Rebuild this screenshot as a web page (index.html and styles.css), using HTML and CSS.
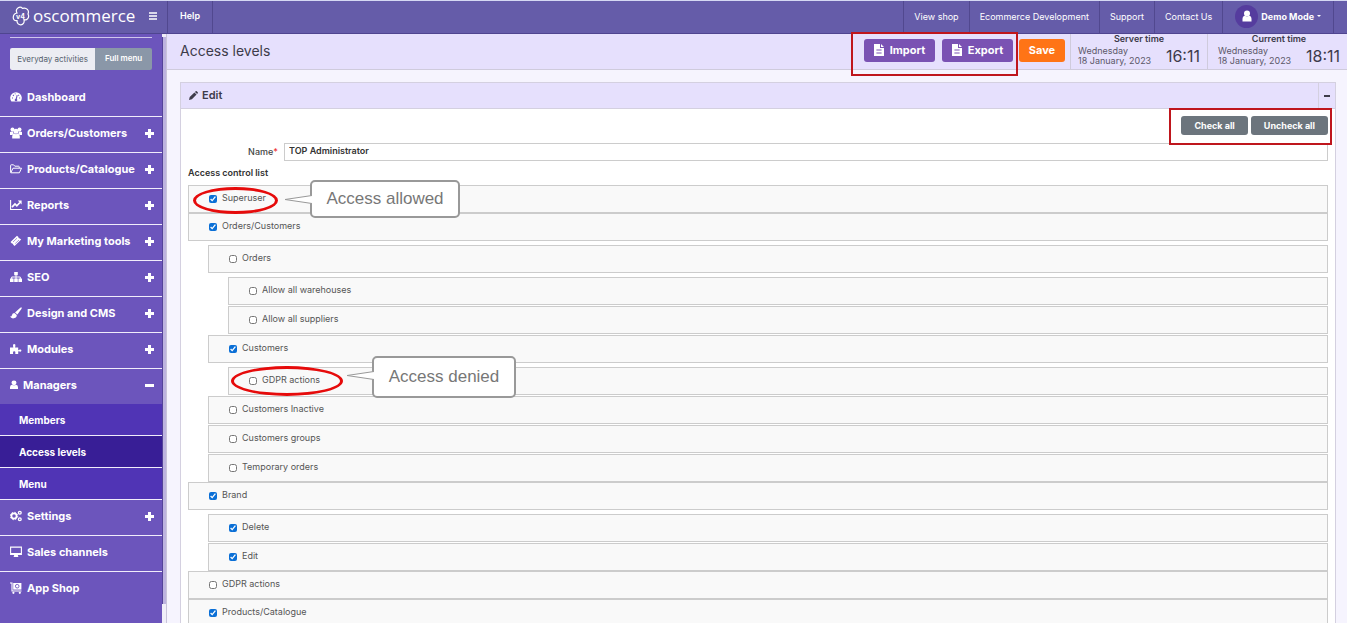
FILE: index.html
```html
<!DOCTYPE html>
<html lang="en">
<head>
  <meta charset="UTF-8">
  <meta name="viewport" content="width=device-width, initial-scale=1">
  <title>Access levels</title>
  <link rel="stylesheet" href="styles.css">
</head>
<body>

  <header class="header">
    <div class="brand">
      <a href="#" class="logo">
        <svg class="logo-icon" viewBox="0 0 18 20">
          <path d="M5 7C2.6 2.4 8 -.4 10.5 2.4C14.5 1 17.6 4.6 16 8C18 11.6 14.6 15 12 13.6C13.4 20.4 4.6 20.4 5 14.6C-.4 15.4 .4 7.6 5 7Z" fill="none" stroke="#fff" stroke-width="1.2"/>
          <text x="4" y="13" class="logo-v">v4</text>
        </svg>
        <span>oscommerce</span>
      </a>
      <button class="menu-toggle" aria-label="Toggle menu">
        <svg viewBox="0 0 8 8"><path d="M0 1h8M0 4h8M0 7h8" stroke="#fff" stroke-width="1.6"/></svg>
      </button>
    </div>
    <nav class="top-nav">
      <a href="#" class="help-link">Help</a>
      <a href="#" class="push-right">View shop</a>
      <a href="#">Ecommerce Development</a>
      <a href="#">Support</a>
      <a href="#">Contact Us</a>
      <a href="#" class="user">
        <span class="avatar"><svg viewBox="0 0 10 12"><circle cx="5" cy="3.4" r="3" fill="#fff"/><path d="M0.5 11.5V9Q0.5 6 3 5.8Q5 7.4 7 5.8Q9.5 6 9.5 9V11.5Z" fill="#fff"/></svg></span>
        Demo Mode
        <span class="caret"></span>
      </a>
    </nav>
  </header>

  <div class="layout">
    <aside class="sidebar">
      <div class="menu-switch">
        <button class="switch-btn">Everyday activities</button>
        <button class="switch-btn active">Full menu</button>
      </div>
      <ul class="menu">
        <li><a href="#">
          <svg class="icon" viewBox="0 0 12 12"><path d="M1.4 10.5A5.8 5.8 0 1 1 10.6 10.5Z" fill="#fff"/><path d="M6 9L7.2 4.2M2 7h1M9.2 7h1M3 4l.8.8M5.2 2.4v.9M9 4l-.7.7" stroke="#6c55bc" stroke-width="1.1"/><circle cx="6" cy="9" r="1.3" fill="#6c55bc"/></svg>
          Dashboard</a></li>
        <li><a href="#">
          <svg class="icon" viewBox="0 0 12 12"><g fill="#fff"><circle cx="2.5" cy="2.4" r="2"/><circle cx="9.5" cy="2.4" r="2"/><circle cx="6" cy="4.2" r="2.5"/><path d="M0 8V5Q1 4 3 4.6L3.6 7Q2.4 7.4 2.2 8ZM12 8V5Q11 4 9 4.6L8.4 7Q9.6 7.4 9.8 8ZM2.2 11.5V9Q2.6 6.8 4.4 6.6Q6 8 7.6 6.6Q9.4 6.8 9.8 9V11.5Z"/></g></svg>
          Orders/Customers</a><span class="sign plus"></span></li>
        <li><a href="#">
          <svg class="icon" viewBox="0 0 12 12"><path d="M.6 9.5V2.4Q.6 1.8 1.2 1.8H3.6L4.8 3.2H8.6Q9.2 3.2 9.2 3.8V5M.8 9.8L3 5.2H11.5L9.4 9.8Z" fill="none" stroke="#fff" stroke-linejoin="round"/></svg>
          Products/Catalogue</a><span class="sign plus"></span></li>
        <li><a href="#">
          <svg class="icon" viewBox="0 0 12 12"><path d="M.6 1V10.5H12" fill="none" stroke="#fff" stroke-width="1.1"/><path d="M2 8.2L5 5L6.8 6.8L10 3.5" fill="none" stroke="#fff" stroke-width="1.7"/><path d="M7.8 1.6H11.6V5.4Z" fill="#fff"/></svg>
          Reports</a><span class="sign plus"></span></li>
        <li><a href="#">
          <svg class="icon" viewBox="0 0 12 12"><path d="M.5 7L7 .8L8.4 2Q8 3.4 9.8 3.4L11.2 4.6L4.6 11L3.2 9.8Q3.4 8.4 1.9 8.4Z" fill="#fff"/><path d="M3 7L7 3.2M5.2 8.6L9 5" stroke="#6c55bc" stroke-width=".6"/></svg>
          My Marketing tools</a><span class="sign plus"></span></li>
        <li><a href="#">
          <svg class="icon" viewBox="0 0 12 12"><path d="M4.2 1h3.6v3.2H4.2ZM0 7.6h3.6V11H0ZM4.2 7.6h3.6V11H4.2ZM8.4 7.6H12V11H8.4Z" fill="#fff"/><path d="M6 4V8M1.7 8V6H10.3V8" fill="none" stroke="#fff"/></svg>
          SEO</a><span class="sign plus"></span></li>
        <li><a href="#">
          <svg class="icon" viewBox="0 0 12 12"><path d="M11.6.4Q12 1 11.4 2L7.4 7.4L5 5.4L10 1Q11 .2 11.6.4ZM4.4 6L6.8 8Q6.8 11.2 3 11.4Q1 11.4 0 9.6Q1.8 9.8 2 8Q2.4 6 4.4 6Z" fill="#fff"/></svg>
          Design and CMS</a><span class="sign plus"></span></li>
        <li><a href="#">
          <svg class="icon" viewBox="0 0 12 12"><path d="M0 4.4H3.2Q3.6 4 3 3.2Q2.6 1 4.2 1Q5.8 1 5.4 3.2Q4.8 4 5.2 4.4H8.2V7Q9 7.4 9.6 6.6Q11.4 6.2 11.4 7.6Q11.4 9.2 9.6 8.6Q9 8 8.2 8.4V11H5.4Q5 10.4 5.4 9.6Q5.4 8.2 4.2 8.2Q3 8.2 3 9.6Q3.4 10.4 3 11H0Z" fill="#fff"/></svg>
          Modules</a><span class="sign plus"></span></li>
        <li><a href="#">
          <svg class="icon narrow" viewBox="0 0 9 12"><circle cx="4.5" cy="3.6" r="2.8" fill="#fff"/><path d="M0 10.5V8.4Q0 6 2.2 5.6Q4.5 7.2 6.8 5.6Q9 6 9 8.4V10.5Z" fill="#fff"/></svg>
          Managers</a><span class="sign minus"></span>
          <ul class="submenu">
            <li><a href="#">Members</a></li>
            <li class="current"><a href="#">Access levels</a></li>
            <li><a href="#">Menu</a></li>
          </ul>
        </li>
        <li><a href="#">
          <svg class="icon" viewBox="0 0 12 12"><circle cx="4" cy="6" r="2.6" fill="none" stroke="#fff" stroke-width="1.7"/><circle cx="4" cy="6" r="3.7" fill="none" stroke="#fff" stroke-width="1" stroke-dasharray="1.5 1.4"/><circle cx="9.8" cy="2.8" r="1.4" fill="none" stroke="#fff" stroke-width="1.3"/><circle cx="9.8" cy="9.2" r="1.4" fill="none" stroke="#fff" stroke-width="1.3"/></svg>
          Settings</a><span class="sign plus"></span></li>
        <li><a href="#">
          <svg class="icon" viewBox="0 0 12 12"><path d="M.6 1.1H11.4V8.4H.6Z" fill="none" stroke="#fff" stroke-width="1.1"/><path d="M1 7h10v1.4H1ZM4.4 8.5H7.6L8.4 11H3.6Z" fill="#fff"/></svg>
          Sales channels</a></li>
        <li><a href="#">
          <svg class="icon" viewBox="0 0 12 12"><path d="M0 1H2V9H11.5" fill="none" stroke="#fff" stroke-width="1.1"/><path d="M3.2 1H11.4V7.6H3.2Z" fill="#fff"/><circle cx="7.2" cy="4.2" r="1.8" fill="none" stroke="#6c55bc" stroke-width=".9"/><circle cx="3.4" cy="10.8" r="1.1" fill="#fff"/><circle cx="9.8" cy="10.8" r="1.1" fill="#fff"/></svg>
          App Shop</a></li>
      </ul>
    </aside>
    <div class="divider"><div class="divider-bar"></div></div>

    <main class="content">
      <div class="page-bar">
        <h1>Access levels</h1>
        <div class="highlight actions-mark">
          <button class="btn btn-purple"><svg viewBox="0 0 10 12"><path d="M0 0H6V4H10V12H0ZM7 0L10 3H7Z" fill="#fff"/><path d="M2.4 6H7.6M2.4 9H7.6" stroke="#7a52b3"/></svg>Import</button>
          <button class="btn btn-purple"><svg viewBox="0 0 10 12"><path d="M0 0H6V4H10V12H0ZM7 0L10 3H7Z" fill="#fff"/><path d="M2.4 6H7.6M2.4 9H7.6" stroke="#7a52b3"/></svg>Export</button>
        </div>
        <button class="btn btn-save">Save</button>
        <div class="clock">
          <strong>Server time</strong>
          <div class="clock-row"><span>Wednesday<br>18 January, 2023</span><span class="time">16:11</span></div>
        </div>
        <div class="clock">
          <strong>Current time</strong>
          <div class="clock-row"><span>Wednesday<br>18 January, 2023</span><span class="time">18:11</span></div>
        </div>
      </div>

      <section class="panel">
        <div class="panel-head">
          <h2><svg viewBox="0 0 10 10"><path d="M0 10L.8 6.8L6 1.6L8.4 4L3.2 9.2ZM6.6 1L7.4.3Q8 -.2 8.6.3L9.7 1.4Q10.2 2 9.7 2.6L9 3.4Z" fill="#3d3b4a"/></svg>Edit</h2>
          <button class="collapse" aria-label="Collapse"></button>
        </div>
        <div class="panel-body">
          <div class="highlight checks-mark">
            <button class="btn-grey">Check all</button>
            <button class="btn-grey">Uncheck all</button>
          </div>
          <div class="field">
            <label for="levelName">Name<span class="required">*</span></label>
            <input type="text" id="levelName" value="TOP Administrator">
          </div>
          <h3>Access control list</h3>

          <ul class="acl">
            <li>
              <div class="acl-row">
                <label><input type="checkbox" checked> Superuser</label>
                <span class="ring ring-allowed"></span>
                <div class="callout callout-allowed">Access allowed
                  <svg viewBox="0 0 28 12"><path d="M28 2.5L1 6.5L28 10.5" fill="#fff" stroke="#999"/></svg>
                </div>
              </div>
            </li>
            <li>
              <div class="acl-row"><label><input type="checkbox" checked> Orders/Customers</label></div>
              <ul>
                <li>
                  <div class="acl-row"><label><input type="checkbox"> Orders</label></div>
                  <ul>
                    <li><div class="acl-row"><label><input type="checkbox"> Allow all warehouses</label></div></li>
                    <li><div class="acl-row"><label><input type="checkbox"> Allow all suppliers</label></div></li>
                  </ul>
                </li>
                <li>
                  <div class="acl-row"><label><input type="checkbox" checked> Customers</label></div>
                  <ul>
                    <li>
                      <div class="acl-row">
                        <label><input type="checkbox"> GDPR actions</label>
                        <span class="ring ring-denied"></span>
                        <div class="callout callout-denied">Access denied
                          <svg viewBox="0 0 28 12"><path d="M28 2.5L1 6.5L28 10.5" fill="#fff" stroke="#999"/></svg>
                        </div>
                      </div>
                    </li>
                  </ul>
                </li>
                <li><div class="acl-row"><label><input type="checkbox"> Customers Inactive</label></div></li>
                <li><div class="acl-row"><label><input type="checkbox"> Customers groups</label></div></li>
                <li><div class="acl-row"><label><input type="checkbox"> Temporary orders</label></div></li>
              </ul>
            </li>
            <li>
              <div class="acl-row"><label><input type="checkbox" checked> Brand</label></div>
              <ul>
                <li><div class="acl-row"><label><input type="checkbox" checked> Delete</label></div></li>
                <li><div class="acl-row"><label><input type="checkbox" checked> Edit</label></div></li>
              </ul>
            </li>
            <li><div class="acl-row"><label><input type="checkbox"> GDPR actions</label></div></li>
            <li><div class="acl-row"><label><input type="checkbox" checked> Products/Catalogue</label></div></li>
          </ul>
        </div>
      </section>
    </main>
  </div>

</body>
</html>
```

FILE: styles.css
```css
* {
  box-sizing: border-box;
}

body {
  margin: 0;
  height: 100vh;
  overflow: hidden;
  display: flex;
  flex-direction: column;
  font-family: Inter, "Liberation Sans", sans-serif;
  font-size: 9px;
  color: #555;
  background-color: #f6f4fe;
}

a {
  color: inherit;
  text-decoration: none;
}

button {
  font-family: inherit;
  border: none;
  padding: 0;
  cursor: pointer;
}

ul {
  list-style: none;
  margin: 0;
  padding: 0;
}

svg {
  display: block;
}

/* Header */
.header {
  display: flex;
  flex: none;
  height: 34px;
  border-top: 1px solid #d5d8f3;
  border-bottom: 1px solid #4f4590;
  background-color: #655ca9;
  color: white;
}

.brand {
  display: flex;
  align-items: center;
  justify-content: space-between;
  width: 168px;
  padding: 0 10px 2px 12px;
  border-right: 1px solid #51488f;
}

.logo {
  display: flex;
  align-items: center;
  gap: 3px;
  font-family: "Open Sans", Lato, sans-serif;
  font-size: 17px;
  font-weight: 400;
  line-height: 20px;
}

.logo-icon {
  width: 18px;
  height: 20px;
}

.logo-v {
  font: bold 7px Inter, sans-serif;
  fill: #fff;
}

.menu-toggle {
  background: none;
}

.menu-toggle svg {
  width: 8px;
  height: 8px;
}

.top-nav {
  display: flex;
  flex: 1;
  padding-right: 13px;
}

.top-nav a {
  display: flex;
  align-items: center;
  padding: 0 10px 2px;
  border-right: 1px solid #51488f;
  font-size: 9px;
  font-weight: 400;
}

.top-nav .help-link {
  padding: 0 12px 3px;
  font-weight: 600;
}

.top-nav .push-right {
  margin-left: auto;
  border-left: 1px solid #51488f;
}

.top-nav .user {
  gap: 3px;
  padding: 0 12px 2px;
  font-weight: 700;
}

.avatar {
  display: flex;
  align-items: center;
  justify-content: center;
  width: 23px;
  height: 23px;
  border-radius: 50%;
  background-color: #553c9e;
}

.avatar svg {
  width: 10px;
  height: 12px;
}

.caret {
  border: 2px solid transparent;
  border-top-color: white;
  border-bottom: none;
}

.layout {
  display: flex;
  flex: 1;
  min-height: 0;
}

/* Sidebar */
.sidebar {
  width: 162px;
  flex: none;
  background-color: #6c55bc;
  color: white;
}

.menu-switch {
  display: flex;
  margin: 3px 10px 0;
  padding-top: 10px;
  border-top: 1px solid #cfc6ec;
}

.switch-btn {
  flex: 3 1 0;
  height: 22px;
  background-color: #ecedf3;
  color: #555f6e;
  font-size: 8px;
  white-space: nowrap;
  border-radius: 2px 0 0 2px;
}

.switch-btn.active {
  flex: 2 1 0;
  padding-bottom: 2px;
  background-color: #8a97a8;
  color: white;
  font-weight: 600;
  border-radius: 0 2px 2px 0;
}

.menu {
  margin-top: 11px;
}

.menu > li {
  position: relative;
  border-bottom: 1px solid #f1edfb;
}

.menu > li:last-child {
  border-bottom: none;
}

.menu > li > a {
  display: flex;
  align-items: center;
  gap: 5px;
  height: 35px;
  padding: 0 0 3px 10px;
  font-size: 11px;
  font-weight: 700;
}

.icon {
  width: 12px;
  height: 12px;
}

.icon.narrow {
  width: 8px;
}

.sign {
  position: absolute;
  top: 12px;
  right: 8px;
  width: 9px;
  height: 9px;
  background: linear-gradient(white, white) center / 9px 3px no-repeat;
}

.sign.plus {
  background: linear-gradient(white, white) center / 9px 3px no-repeat,
    linear-gradient(white, white) center / 3px 9px no-repeat;
}

.submenu a {
  display: flex;
  align-items: center;
  height: 31px;
  padding-left: 19px;
  background-color: #5034b5;
  font-size: 10px;
  font-weight: 700;
}

.submenu li + li {
  border-top: 1px solid #f1edfb;
}

.submenu .current a {
  background-color: #381e96;
}

.divider {
  width: 5px;
  flex: none;
  padding: 3px 0 19px;
  border-right: 1px solid #c9c4da;
  background-color: #f0eef8;
}

.divider-bar {
  height: 100%;
  background-color: #bdb3df;
  border-left: 1px solid #54439a;
}

/* Page title bar */
.content {
  flex: 1;
  min-width: 0;
}

.page-bar {
  display: flex;
  height: 36px;
  border-bottom: 1px solid #cfcbdc;
  background-color: #e6e0fd;
}

.page-bar h1 {
  margin: 0 auto 0 13px;
  font-size: 14px;
  font-weight: 400;
  line-height: 34px;
  color: #3d3b4a;
}

.highlight {
  position: relative;
  z-index: 1;
  display: flex;
  border: 2px solid #bf161d;
}

.actions-mark {
  gap: 7px;
  height: 44px;
  margin-top: -2px;
  padding: 5px 3px 0 11px;
}

.btn {
  display: flex;
  align-items: center;
  justify-content: center;
  gap: 6px;
  height: 23px;
  border-radius: 3px;
  color: white;
  font-size: 11px;
  font-weight: 700;
}

.btn-purple {
  width: 71px;
  padding-bottom: 1px;
  background-color: #7a52b3;
}

.btn-purple svg {
  width: 10px;
  height: 12px;
}

.btn-save {
  width: 46px;
  margin: 5px 5px 0 1px;
  padding-bottom: 1px;
  background-color: #ff7416;
}

.clock {
  width: 137px;
  padding: 0 7px;
  border-left: 1px solid #cfcbdc;
  text-align: center;
  line-height: 10px;
  color: #5c5869;
}

.clock + .clock {
  width: 140px;
  padding-left: 10px;
}

.clock strong {
  font-weight: 600;
  color: #3d3b4a;
}

.clock-row {
  display: flex;
  align-items: center;
  justify-content: space-between;
  margin-top: 2px;
  text-align: left;
}

.clock-row .time {
  font-size: 16px;
  color: #3d3b4a;
}

/* Edit panel */
.panel {
  margin: 12px 11px 0 13px;
  border: 1px solid #d4d0e0;
  background-color: white;
}

.panel-head {
  display: flex;
  justify-content: space-between;
  height: 26px;
  border-bottom: 1px solid #d4d0e0;
  background-color: #e6e0fd;
}

.panel-head h2 {
  display: flex;
  align-items: center;
  gap: 4px;
  margin: 0 0 0 8px;
  padding-bottom: 1px;
  font-size: 11px;
  font-weight: 600;
  color: #3d3b4a;
}

.panel-head svg {
  width: 9px;
  height: 9px;
}

.collapse {
  width: 17px;
  border-left: 1px solid #d4d0e0;
  background: linear-gradient(#3d3b4a, #3d3b4a) center / 6px 2px no-repeat;
}

.panel-body {
  padding: 0 7px;
}

.checks-mark {
  gap: 3px;
  width: fit-content;
  height: 37px;
  margin: -1px -4px 0 auto;
  padding: 6px 2px 0 10px;
}

.btn-grey {
  height: 19px;
  padding: 0 13px;
  border-radius: 3px;
  background-color: #6c757d;
  color: white;
  font-size: 9px;
  font-weight: 700;
}

.field {
  display: flex;
  align-items: center;
  gap: 6px;
  margin-top: -2px;
}

.field label {
  width: 90px;
  padding-bottom: 2px;
  text-align: right;
  font-weight: 500;
  color: #444;
}

.required {
  color: #e33;
}

.field input {
  flex: 1;
  height: 18px;
  padding: 0 4px 3px;
  border: 1px solid #ccc;
  font-family: inherit;
  font-size: 9px;
  font-weight: 600;
  color: #333;
}

.panel-body h3 {
  margin: 6px 0;
  font-size: 9px;
  font-weight: 600;
  line-height: 12px;
  color: #333;
}

/* Access control list */
.acl ul {
  margin: 4px 0 0 20px;
}

.acl ul > li + li {
  margin-top: 1px;
}

.acl-row {
  position: relative;
  height: 28px;
  padding-left: 20px;
  border: 1px solid #ccc;
  background-color: #f9f9f9;
}

.acl-row label {
  display: inline-flex;
  align-items: center;
  gap: 5px;
  line-height: 24px;
}

.acl-row input {
  width: 8px;
  height: 8px;
  margin: 2px 0 0;
  accent-color: #0b6fd6;
}

.ring {
  position: absolute;
  z-index: 2;
  border: 3px solid #e60b0b;
  border-radius: 50%;
}

.ring-allowed {
  top: 1px;
  left: 4px;
  width: 85px;
  height: 27px;
}

.ring-denied {
  top: -2px;
  left: 2px;
  width: 112px;
  height: 30px;
}

.callout {
  position: absolute;
  z-index: 2;
  border: 2px solid #999;
  border-radius: 5px;
  background-color: white;
  color: #777;
  font-family: "Liberation Sans", Arial, sans-serif;
  font-size: 17px;
  text-align: center;
}

.callout svg {
  position: absolute;
  top: 11px;
  left: -28px;
  width: 28px;
  height: 12px;
}

.callout-allowed {
  top: -6px;
  left: 121px;
  width: 150px;
  height: 38px;
  line-height: 34px;
}

.callout-denied {
  top: -12px;
  left: 143px;
  width: 144px;
  height: 42px;
  line-height: 38px;
}
```
